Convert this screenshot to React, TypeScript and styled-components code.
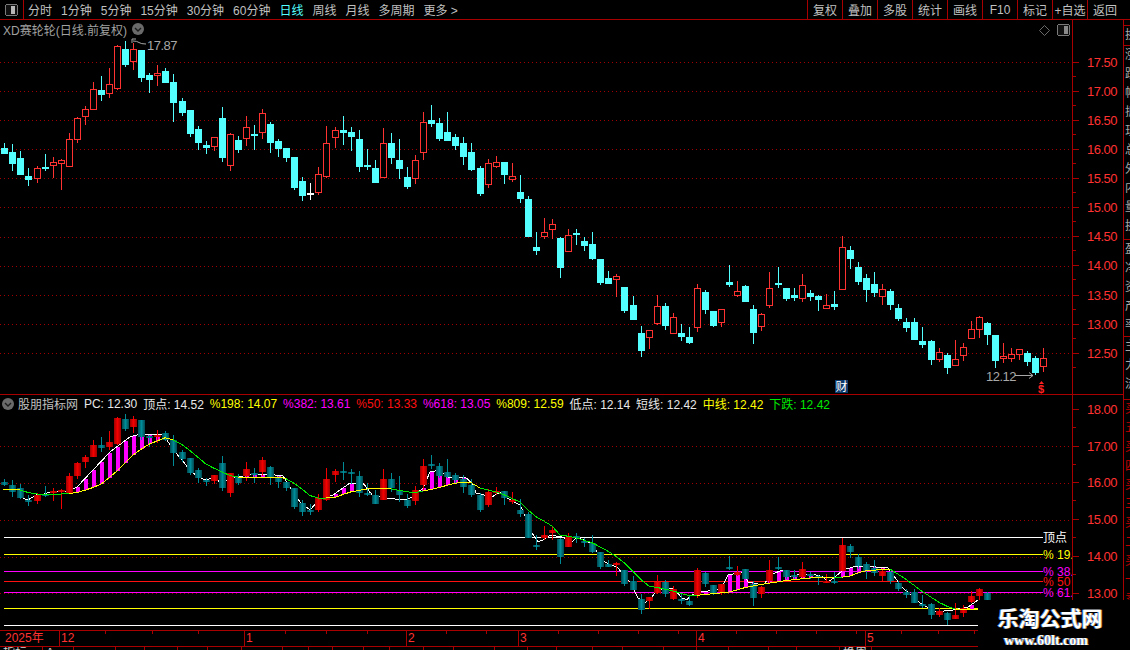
import React from "react";
import styled, { createGlobalStyle } from "styled-components";

const RED = "#a80000";
const AXIS_RED = "#ff3232";
const CYAN = "#54ffff";
const FONT = `"Liberation Sans", "Noto Sans CJK SC", sans-serif`;

// high, body top, body bottom, low, up (all page pixels of the upper pane)
type Candle = [number, number, number, number, number];

const candles: Candle[] = [
  [143, 148, 153, 154, 0], [144, 152, 163, 171, 0], [151, 158, 174, 175, 0], [168, 176, 179, 186, 0],
  [166, 168, 178, 183, 1], [154, 167, 168, 171, 0], [157, 162, 165, 178, 1], [159, 160, 163, 190, 1],
  [133, 139, 166, 166, 1], [117, 118, 139, 143, 1], [106, 109, 116, 125, 1], [82, 89, 109, 109, 1],
  [76, 90, 94, 101, 0], [68, 84, 93, 98, 1], [45, 46, 88, 90, 1], [41, 49, 64, 67, 0],
  [43, 49, 61, 70, 1], [50, 50, 77, 82, 0], [73, 75, 79, 93, 0], [65, 73, 75, 86, 1],
  [68, 71, 82, 83, 0], [74, 82, 102, 122, 0], [98, 101, 112, 116, 0], [110, 110, 133, 137, 0],
  [126, 129, 142, 150, 0], [141, 145, 147, 154, 0], [137, 137, 146, 151, 1], [107, 118, 157, 162, 0],
  [133, 134, 165, 171, 1], [136, 140, 149, 153, 0], [116, 127, 138, 146, 1], [125, 134, 135, 150, 0],
  [109, 113, 132, 139, 1], [122, 124, 142, 153, 0], [139, 141, 148, 157, 0], [148, 148, 157, 162, 0],
  [157, 157, 187, 190, 0], [177, 181, 195, 201, 0], [183, 193, 194, 200, 2], [167, 174, 192, 195, 1],
  [126, 143, 176, 178, 1], [127, 130, 137, 148, 1], [116, 130, 132, 145, 0], [127, 132, 136, 151, 0],
  [130, 139, 166, 172, 0], [149, 165, 166, 170, 0], [160, 168, 182, 183, 0], [128, 143, 177, 177, 1],
  [133, 143, 157, 164, 0], [139, 160, 168, 179, 0], [167, 177, 186, 189, 0], [155, 160, 178, 184, 1],
  [112, 122, 152, 160, 1], [105, 120, 123, 127, 0], [118, 123, 138, 141, 0], [112, 132, 140, 141, 0],
  [134, 137, 145, 150, 0], [137, 143, 156, 165, 0], [143, 152, 169, 171, 0], [166, 168, 193, 196, 0],
  [159, 163, 184, 188, 1], [156, 162, 166, 168, 1], [162, 162, 174, 184, 0], [163, 176, 179, 182, 1],
  [175, 192, 198, 203, 0], [196, 199, 236, 236, 0], [232, 247, 250, 255, 0], [218, 232, 236, 239, 1],
  [219, 224, 229, 239, 1], [237, 238, 267, 278, 0], [229, 235, 251, 251, 1], [229, 233, 234, 245, 0],
  [237, 241, 245, 251, 0], [232, 244, 258, 260, 0], [259, 259, 282, 285, 0], [271, 278, 283, 283, 0],
  [274, 276, 279, 297, 1], [287, 287, 310, 313, 0], [296, 305, 319, 319, 0], [326, 333, 350, 357, 0],
  [330, 330, 337, 349, 1], [295, 306, 323, 325, 1], [303, 306, 325, 330, 0], [313, 317, 333, 334, 1],
  [324, 333, 336, 341, 0], [327, 337, 342, 344, 0], [284, 288, 327, 332, 1], [290, 292, 309, 314, 0],
  [311, 311, 325, 327, 0], [309, 309, 322, 327, 1], [265, 282, 284, 287, 0], [281, 291, 295, 297, 1],
  [285, 286, 301, 302, 0], [305, 309, 332, 344, 0], [313, 314, 326, 331, 1], [272, 288, 305, 308, 1],
  [267, 283, 284, 288, 0], [288, 288, 298, 301, 0], [288, 295, 297, 301, 0], [274, 285, 298, 302, 1],
  [290, 293, 296, 301, 0], [295, 296, 299, 311, 0], [294, 305, 308, 308, 1], [291, 304, 306, 310, 0],
  [236, 247, 289, 289, 1], [246, 250, 258, 269, 0], [262, 267, 281, 285, 0], [274, 278, 289, 302, 0],
  [272, 284, 292, 297, 0], [284, 289, 296, 305, 1], [289, 291, 304, 310, 0], [304, 308, 318, 321, 0],
  [318, 322, 327, 332, 0], [318, 322, 339, 339, 0], [327, 341, 344, 348, 0], [340, 341, 359, 365, 0],
  [348, 352, 359, 362, 1], [353, 355, 367, 374, 0], [340, 359, 365, 365, 1], [343, 347, 355, 361, 1],
  [321, 329, 338, 339, 1], [316, 317, 329, 338, 1], [322, 323, 334, 345, 0], [335, 335, 360, 368, 0],
  [343, 356, 358, 363, 1], [348, 354, 358, 362, 1], [349, 349, 354, 360, 1], [351, 353, 361, 366, 0],
  [356, 358, 372, 375, 0], [348, 358, 366, 372, 1],
];

const midPoints: [number, number][] = [
  [3, 489], [20, 490], [33, 494], [67, 494], [80, 492], [100, 485], [115, 473], [133, 455], [147, 445],
  [167, 437], [180, 443], [193, 453], [207, 465], [233, 477], [283, 477], [297, 485], [313, 498], [333, 498],
  [350, 492], [367, 489], [387, 488], [413, 493], [433, 489], [460, 482], [470, 482], [480, 488], [500, 493],
  [520, 502], [533, 515], [542, 520], [552, 526], [560, 535], [573, 537], [593, 543], [613, 554], [627, 565],
  [638, 577], [648, 586], [660, 588], [673, 591], [690, 596], [700, 595], [720, 593], [730, 592], [747, 587],
  [770, 583], [790, 580], [820, 577], [837, 578], [850, 576], [863, 571], [890, 569], [907, 580], [923, 592],
  [940, 603], [953, 609], [978, 610],
];

const shortPoints: [number, number][] = [
  [3, 489], [17, 490], [20, 497], [28, 500], [36, 495], [44, 494], [53, 491], [60, 491], [67, 492], [77, 487],
  [93, 470], [110, 452], [130, 437], [140, 434], [163, 434], [172, 448], [181, 459], [190, 470], [198, 477],
  [206, 480], [214, 477], [222, 484], [230, 478], [238, 477], [253, 474], [267, 474], [283, 476], [292, 490],
  [300, 502], [310, 510], [320, 499], [333, 495], [350, 483], [363, 483], [372, 495], [385, 498], [405, 500],
  [413, 497], [423, 488], [430, 472], [440, 470], [448, 478], [465, 477], [472, 483], [476, 493], [492, 497],
  [500, 492], [507, 498], [520, 505], [527, 520], [532, 533], [538, 542], [545, 539], [550, 535], [562, 537],
  [572, 542], [577, 537], [590, 543], [605, 562], [618, 568], [630, 582], [638, 598], [645, 603], [652, 597],
  [657, 590], [673, 588], [682, 598], [687, 600], [690, 596], [700, 592], [717, 590], [723, 585], [728, 575],
  [742, 572], [748, 582], [763, 585], [773, 574], [782, 570], [790, 577], [797, 575], [813, 574], [823, 577],
  [828, 582], [835, 577], [843, 570], [853, 567], [863, 566], [888, 568], [903, 588], [920, 603], [935, 612],
  [953, 610], [968, 607], [978, 600],
];

const greenRanges: [number, number][] = [
  [20, 62], [170, 238], [285, 322], [385, 420], [477, 690], [833, 838], [890, 953],
];

const levels = [
  { y: 537, color: "#ffffff", label: "顶点" },
  { y: 554, color: "#ffff00", label: "% 19.8" },
  { y: 571, color: "#ff00ff", label: "% 38.2" },
  { y: 581, color: "#ff1010", label: "% 50" },
  { y: 592, color: "#ff00ff", label: "% 61.8" },
  { y: 608, color: "#ffff00", label: "" },
  { y: 625, color: "#ffffff", label: "" },
];

const upperDots = [62, 91, 120, 149, 178, 207, 237, 266, 295, 324, 353];
const lowerDots = [446, 483, 520, 557, 593];

const candleX = (i: number) => Math.round(4.33 + 8.054 * i);
const toLower = (y: number) => 427.7 + (y - 62) * 0.6318;

const sample = (points: [number, number][], x: number) => {
  for (let i = 1; i < points.length; i++) {
    const [x0, y0] = points[i - 1];
    const [x1, y1] = points[i];
    if (x <= x1) return y0 + ((y1 - y0) * (x - x0)) / (x1 - x0);
  }
  return points[points.length - 1][1];
};

const isGreen = (x: number) => greenRanges.some(([a, b]) => x >= a && x < b);

const GlobalStyle = createGlobalStyle`
  html, body {
    margin: 0;
    background: #000;
  }
`;

const Page = styled.div`
  position: relative;
  width: 1130px;
  height: 650px;
  overflow: hidden;
  background: #000;
  font-family: ${FONT};
  font-size: 12px;
  color: #c0c0c0;
`;

const Toolbar = styled.div`
  display: flex;
  align-items: center;
  height: 19px;
  padding-right: 8px;
  border-bottom: 1px solid ${RED};
`;

const PanelToggle = styled.div`
  display: flex;
  align-items: center;
  justify-content: center;
  width: 23px;
  height: 100%;
  border-right: 1px solid ${RED};
`;

const Periods = styled.div`
  display: flex;
  align-items: center;
  gap: 9px;
  margin-left: 4px;
`;

const Period = styled.span<{ $active?: boolean }>`
  white-space: nowrap;
  color: ${({ $active }) => ($active ? CYAN : "#c0c0c0")};
`;

const ToolButtons = styled.div`
  display: flex;
  height: 100%;
  margin-left: auto;
`;

const ToolButton = styled.div`
  display: flex;
  align-items: center;
  justify-content: center;
  box-sizing: border-box;
  width: 35px;
  white-space: nowrap;
  border-left: 1px solid ${RED};
`;

const Workspace = styled.div`
  display: flex;
`;

const Charts = styled.div`
  width: 1123px;
`;

const SideColumn = styled.div`
  width: 6px;
  border-left: 1px solid ${RED};
  overflow: hidden;
`;

const SideSection = styled.div<{ $height: number; $color?: string }>`
  box-sizing: border-box;
  height: ${({ $height }) => $height}px;
  overflow: hidden;
  padding-left: 1px;
  border-bottom: 1px solid ${RED};
  width: 20px;
  line-height: 19px;
  word-break: break-all;
  color: ${({ $color }) => $color ?? "#a8a8a8"};
`;

const SideChars = styled.div`
  width: 12px;
`;

const Pane = styled.div<{ $height: number }>`
  position: relative;
  display: flex;
  box-sizing: border-box;
  height: ${({ $height }) => $height}px;
  border-bottom: 1px solid ${RED};
  overflow: hidden;
`;

const Plot = styled.svg`
  display: block;
  flex: none;
  width: 1072px;
  height: 100%;
  font-family: ${FONT};
`;

const Axis = styled.div<{ $offset: number }>`
  flex: none;
  box-sizing: border-box;
  width: 51px;
  padding-top: ${({ $offset }) => Math.max($offset, 0)}px;
  margin-top: ${({ $offset }) => Math.min($offset, 0)}px;
  border-left: 1px solid ${RED};
  height: 700px;
`;

const AxisRow = styled.div<{ $height: number }>`
  position: relative;
  display: flex;
  align-items: center;
  height: ${({ $height }) => $height}px;

  &::after {
    content: "";
    position: absolute;
    left: 0;
    bottom: 0;
    width: 3px;
    height: 1px;
    background: ${RED};
  }
`;

const AxisTick = styled.span`
  width: 6px;
  height: 1px;
  margin-right: 8px;
  background: ${RED};
`;

const AxisLabel = styled.span`
  font-size: 13px;
  letter-spacing: -0.5px;
  color: ${AXIS_RED};
`;

const PaneTitle = styled.div`
  position: absolute;
  top: 2px;
  left: 3px;
  display: flex;
  align-items: center;
  gap: 5px;
  height: 14px;
  color: #a0a0a0;
  white-space: nowrap;
`;

const PaneTools = styled.div`
  position: absolute;
  top: 4px;
  left: 1039px;
  display: flex;
  align-items: center;
  gap: 7px;
`;

const Legend = styled.div`
  position: absolute;
  top: 1px;
  left: 2px;
  display: flex;
  align-items: center;
  gap: 5.9px;
  height: 15px;
  white-space: nowrap;
`;

const LegendName = styled.span`
  margin-left: -1.9px;
  color: #c0c0c0;
`;

const LegendItem = styled.span<{ $color: string }>`
  color: ${({ $color }) => $color};
`;

const TimeAxis = styled.div`
  display: flex;
  box-sizing: border-box;
  height: 16px;
  border-bottom: 1px solid ${RED};
  color: ${AXIS_RED};
  line-height: 14px;
`;

const YearCell = styled.div`
  width: 59px;
  padding-left: 5px;
  box-sizing: border-box;
`;

const MonthCell = styled.div<{ $width: number; $step: number }>`
  flex: none;
  box-sizing: border-box;
  width: ${({ $width }) => $width}px;
  padding-left: 1px;
  border-left: 1px solid ${RED};
  background-image: repeating-linear-gradient(
    to right,
    transparent 0,
    transparent ${({ $step }) => $step - 1}px,
    ${RED} ${({ $step }) => $step - 1}px,
    ${RED} ${({ $step }) => $step}px
  );
  background-size: 100% 3px;
  background-repeat: no-repeat;
`;

const Tabs = styled.div`
  display: flex;
  height: 3px;
  overflow: hidden;
  line-height: 12px;
  color: #d0d0d0;
`;

const Tab = styled.div<{ $width: number }>`
  flex: none;
  box-sizing: border-box;
  width: ${({ $width }) => $width}px;
  padding-left: 3px;
  border-right: 1px solid ${RED};
  white-space: nowrap;
`;

const Watermark = styled.div`
  position: absolute;
  left: 978px;
  top: 600px;
  display: flex;
  flex-direction: column;
  align-items: center;
  box-sizing: border-box;
  width: 152px;
  height: 50px;
  padding: 7px 8px 0 0;
  background: #000;
`;

const WatermarkTitle = styled.div`
  font-size: 21px;
  font-weight: 700;
  line-height: 24px;
  color: #fff;
  white-space: nowrap;
  text-shadow: -1px 0 0 #3a78c8, 1px 0 0 #c88a3a;
`;

const WatermarkUrl = styled.div`
  margin-top: 2px;
  padding-right: 8px;
  font-family: "Liberation Serif", serif;
  font-size: 14px;
  font-weight: 700;
  line-height: 15px;
  color: #fff;
  white-space: nowrap;
  text-shadow: -1px 0 0 #3a78c8, 1px 0 0 #c88a3a;
`;

const ChevronBadge = () => (
  <svg width="12" height="12" viewBox="0 0 12 12">
    <circle cx="6" cy="6" r="6" fill="#6a6a6a" />
    <path d="M3 5 L6 8 L9 5" fill="none" stroke="#1c1c1c" strokeWidth="1.4" />
  </svg>
);

const PanelIcon = ({ side }: { side: "left" | "right" }) => (
  <svg width="13" height="12" viewBox="0 0 13 12" shapeRendering="crispEdges">
    <rect x="0.5" y="0.5" width="12" height="11" rx="2" fill="#111" stroke="#7a7a7a" />
    <rect x={side === "left" ? 6 : 7} y="2" width="4" height="8" fill={side === "left" ? "#b8b8b8" : "#8a8a8a"} />
  </svg>
);

const DiamondIcon = () => (
  <svg width="11" height="11" viewBox="0 0 11 11">
    <path d="M5.5 0.5 L10.5 5.5 L5.5 10.5 L0.5 5.5 Z" fill="none" stroke="#6a6a6a" />
  </svg>
);

const DotLines = ({ rows }: { rows: number[] }) => (
  <g shapeRendering="crispEdges">
    {rows.map((y) => (
      <line key={y} x1="0" x2="1072" y1={y + 0.5} y2={y + 0.5} stroke="#a00000" strokeDasharray="1 3" />
    ))}
  </g>
);

const UpperCandles = () => (
  <g shapeRendering="crispEdges">
    {candles.map(([high, top, bottom, low, kind], i) => {
      const x = candleX(i);
      const color = kind === 1 ? "#ff3232" : kind === 2 ? "#ffffff" : CYAN;
      const h = Math.max(bottom - top, 1);
      return (
        <g key={i}>
          <rect x={x} y={high} width="1" height={low - high} fill={color} />
          {kind === 1 ? (
            <rect x={x - 2.5} y={top + 0.5} width="6" height={h} fill="#000" stroke={color} />
          ) : (
            <rect x={x - 3} y={top} width="7" height={h + 1} fill={color} />
          )}
        </g>
      );
    })}
  </g>
);

const LowerCandles = () => (
  <g shapeRendering="crispEdges">
    {candles.map(([high, top, bottom, low, kind], i) => {
      const x = candleX(i);
      const up = kind === 1;
      const y = Math.round(toLower(top));
      const h = Math.max(Math.round(toLower(bottom)) - y, 2);
      const wickTop = Math.round(toLower(high));
      return (
        <g key={i}>
          <rect x={x} y={wickTop} width="1" height={Math.round(toLower(low)) - wickTop} fill={up ? "#f00000" : "#008a96"} />
          <rect x={x - 3} y={y} width="7" height={h} fill={up ? "url(#redBody)" : "url(#tealBody)"} />
        </g>
      );
    })}
  </g>
);

const Hatches = () => (
  <g shapeRendering="crispEdges">
    {candles.map((_, i) => {
      const x = candleX(i);
      const top = sample(shortPoints, x);
      const bottom = sample(midPoints, x);
      if (x > 978 || isGreen(x) || bottom - top < 1) return null;
      return <rect key={i} x={x - 1} y={top} width="4" height={bottom - top} fill="#ff00ff" />;
    })}
  </g>
);

const MidLine = () => {
  const xs = [3, ...candles.map((_, i) => candleX(i)).filter((x) => x > 3 && x < 978), 978];
  return (
    <g shapeRendering="crispEdges">
      {xs.slice(1).map((x, i) => (
        <line
          key={x}
          x1={xs[i]}
          x2={x}
          y1={sample(midPoints, xs[i])}
          y2={sample(midPoints, x)}
          stroke={isGreen(xs[i]) ? "#00e800" : "#ffff00"}
          strokeWidth="1"
        />
      ))}
    </g>
  );
};

const UpperPlot = () => (
  <Plot viewBox="0 20 1072 374">
    <DotLines rows={upperDots} />
    <UpperCandles />
    <path d="M132 43 L132 39 L136 39 M133 41 Q137 41 139 42.5 T146 44" fill="none" stroke="#a8a8a8" />
    <text x="147" y="50" fontSize="13" letterSpacing="-0.5" fill="#a8a8a8">17.87</text>
    <text x="986" y="381" fontSize="13" letterSpacing="-0.5" fill="#a8a8a8">12.12</text>
    <path d="M1015 375.5 L1033 375.5 M1029 372.5 L1033 375.5 L1029 378.5" fill="none" stroke="#a8a8a8" />
    <rect x="835" y="380" width="13" height="13" fill="#0c3a6c" />
    <text x="835.5" y="391" fontSize="12" fill="#fff">财</text>
    <path d="M1041.5 381 L1039 384 L1044 384 Z" fill="#ff2020" />
    <text x="1038" y="393" fontSize="11" fontWeight="700" fill="#ff2020">$</text>
  </Plot>
);

const LowerPlot = () => (
  <Plot viewBox="0 395 1072 235">
    <defs>
      <linearGradient id="tealBody">
        <stop offset="0" stopColor="#00484f" />
        <stop offset="0.5" stopColor="#008c98" />
        <stop offset="1" stopColor="#00484f" />
      </linearGradient>
      <linearGradient id="redBody">
        <stop offset="0" stopColor="#a00000" />
        <stop offset="0.5" stopColor="#f40000" />
        <stop offset="1" stopColor="#a00000" />
      </linearGradient>
    </defs>
    <DotLines rows={lowerDots} />
    <g shapeRendering="crispEdges">
      {levels.map(({ y, color }) => (
        <rect key={y} x="4" y={y} width="1039" height="1" fill={color} />
      ))}
    </g>
    {levels.map(({ y, color, label }) =>
      label ? (
        <text key={y} x="1043" y={y + 4.5} fontSize="12" fill={color}>{label}</text>
      ) : null
    )}
    <Hatches />
    <polyline points={shortPoints.join(" ")} fill="none" stroke="#ffffff" strokeWidth="1" shapeRendering="crispEdges" />
    <LowerCandles />
    <MidLine />
  </Plot>
);

const PriceAxis = ({ labels, rowHeight, offset }: { labels: string[]; rowHeight: number; offset: number }) => (
  <Axis $offset={offset}>
    {labels.map((label) => (
      <AxisRow key={label} $height={rowHeight}>
        <AxisTick />
        <AxisLabel>{label}</AxisLabel>
      </AxisRow>
    ))}
  </Axis>
);

const periods = ["分时", "1分钟", "5分钟", "15分钟", "30分钟", "60分钟", "日线", "周线", "月线", "多周期", "更多 >"];
const tools = ["复权", "叠加", "多股", "统计", "画线", "F10", "标记", "+自选", "返回"];

const legendItems = [
  { text: "PC: 12.30", color: "#e8e8e8" },
  { text: "顶点: 14.52", color: "#e8e8e8" },
  { text: "%198: 14.07", color: "#ffff00" },
  { text: "%382: 13.61", color: "#ff00ff" },
  { text: "%50: 13.33", color: "#ff1010" },
  { text: "%618: 13.05", color: "#ff00ff" },
  { text: "%809: 12.59", color: "#ffff00" },
  { text: "低点: 12.14", color: "#e8e8e8" },
  { text: "短线: 12.42", color: "#e8e8e8" },
  { text: "中线: 12.42", color: "#ffff00" },
  { text: "下跌: 12.42", color: "#00e800" },
];

const months = [
  { label: "12", width: 185, step: 46.4 },
  { label: "1", width: 162, step: 41 },
  { label: "2", width: 112, step: 40 },
  { label: "3", width: 178, step: 40 },
  { label: "4", width: 169, step: 40 },
  { label: "5", width: 258, step: 36.4 },
];

const tabWidths = [43, 31, 42, 29, 33, 30, 34, 41, 26, 24, 31, 26, 34, 30, 41, 33, 29, 36, 30, 41, 33, 32, 40, 28, 43, 32];
const tabLabels: Record<number, string> = { 0: "指标", 1: "A", 25: "换周" };

const upperLabels = ["17.50", "17.00", "16.50", "16.00", "15.50", "15.00", "14.50", "14.00", "13.50", "13.00", "12.50"];
const lowerLabels = ["18.00", "17.00", "16.00", "15.00", "14.00", "13.00"];

export default function App() {
  return (
    <Page>
      <GlobalStyle />
      <Toolbar>
        <PanelToggle>
          <PanelIcon side="left" />
        </PanelToggle>
        <Periods>
          {periods.map((p) => (
            <Period key={p} $active={p === "日线"}>{p}</Period>
          ))}
        </Periods>
        <ToolButtons>
          {tools.map((t) => (
            <ToolButton key={t}>{t}</ToolButton>
          ))}
        </ToolButtons>
      </Toolbar>
      <Workspace>
        <Charts>
          <Pane $height={375}>
            <UpperPlot />
            <PriceAxis labels={upperLabels} rowHeight={29.125} offset={27.44} />
            <PaneTitle>
              XD赛轮轮(日线.前复权)
              <ChevronBadge />
            </PaneTitle>
            <PaneTools>
              <DiamondIcon />
              <PanelIcon side="right" />
            </PaneTools>
          </Pane>
          <Pane $height={236}>
            <LowerPlot />
            <PriceAxis labels={lowerLabels} rowHeight={36.8} offset={-4.1} />
            <Legend>
              <ChevronBadge />
              <LegendName>股朋指标网</LegendName>
              {legendItems.map(({ text, color }) => (
                <LegendItem key={text} $color={color}>{text}</LegendItem>
              ))}
            </Legend>
          </Pane>
          <TimeAxis>
            <YearCell>2025年</YearCell>
            {months.map(({ label, width, step }) => (
              <MonthCell key={label} $width={width} $step={step}>{label}</MonthCell>
            ))}
          </TimeAxis>
          <Tabs>
            {tabWidths.map((w, i) => (
              <Tab key={i} $width={w}>{tabLabels[i]}</Tab>
            ))}
          </Tabs>
        </Charts>
        <SideColumn>
          <SideSection $height={6} />
          <SideSection $height={20}>
            <SideChars>换</SideChars>
          </SideSection>
          <SideSection $height={194}>
            <SideChars>涨跌幅振现总外内量换</SideChars>
          </SideSection>
          <SideSection $height={97}>
            <SideChars>盈净资产率</SideChars>
          </SideSection>
          <SideSection $height={63}>
            <SideChars>主力流</SideChars>
          </SideSection>
          <SideSection $height={260} $color="#c00000">
            <SideChars>买五买四买三买二买一卖一卖二卖三</SideChars>
          </SideSection>
        </SideColumn>
      </Workspace>
      <Watermark>
        <WatermarkTitle>乐淘公式网</WatermarkTitle>
        <WatermarkUrl>www.60lt.com</WatermarkUrl>
      </Watermark>
    </Page>
  );
}
